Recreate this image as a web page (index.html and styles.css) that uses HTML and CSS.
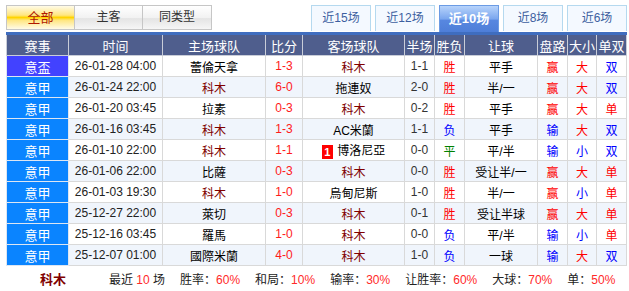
FILE: index.html
```html
<!DOCTYPE html>
<html lang="zh-CN">
<head>
    <meta charset="UTF-8">
    <title>科木 近期战绩</title>
    <link rel="stylesheet" href="styles.css">
</head>
<body>
    <div class="record">
        <div class="tabs">
            <div class="tab-group left">
                <div class="tab-l active">全部</div>
                <div class="tab-l">主客</div>
                <div class="tab-l">同类型</div>
            </div>
            <div class="tab-group right">
                <div class="tab-r">近15场</div>
                <div class="tab-r">近12场</div>
                <div class="tab-r active">近10场</div>
                <div class="tab-r">近8场</div>
                <div class="tab-r">近6场</div>
            </div>
        </div>

        <table class="matches">
            <colgroup>
                <col style="width:62px">
                <col style="width:94px">
                <col style="width:103px">
                <col style="width:37px">
                <col style="width:102px">
                <col style="width:30px">
                <col style="width:30px">
                <col style="width:73px">
                <col style="width:30px">
                <col style="width:29px">
                <col style="width:30px">
            </colgroup>
            <thead>
                <tr>
                    <th>赛事</th><th>时间</th><th>主场球队</th><th>比分</th><th>客场球队</th>
                    <th>半场</th><th>胜负</th><th>让球</th><th>盘路</th><th>大小</th><th>单双</th>
                </tr>
            </thead>
            <tbody>
                <tr>
                    <td class="league cup">意盃</td><td class="time">26-01-28 04:00</td>
                    <td>蕾倫天拿</td><td class="score">1-3</td><td class="self">科木</td>
                    <td class="half">1-1</td><td class="win">胜</td><td>平手</td>
                    <td class="win">赢</td><td class="win">大</td><td class="lose">双</td>
                </tr>
                <tr>
                    <td class="league">意甲</td><td class="time">26-01-24 22:00</td>
                    <td class="self">科木</td><td class="score">6-0</td><td>拖連奴</td>
                    <td class="half">2-0</td><td class="win">胜</td><td>半/一</td>
                    <td class="win">赢</td><td class="win">大</td><td class="lose">双</td>
                </tr>
                <tr>
                    <td class="league">意甲</td><td class="time">26-01-20 03:45</td>
                    <td>拉素</td><td class="score">0-3</td><td class="self">科木</td>
                    <td class="half">0-2</td><td class="win">胜</td><td>平手</td>
                    <td class="win">赢</td><td class="win">大</td><td class="win">单</td>
                </tr>
                <tr>
                    <td class="league">意甲</td><td class="time">26-01-16 03:45</td>
                    <td class="self">科木</td><td class="score">1-3</td><td>AC米蘭</td>
                    <td class="half">1-1</td><td class="lose">负</td><td>平手</td>
                    <td class="lose">输</td><td class="win">大</td><td class="lose">双</td>
                </tr>
                <tr>
                    <td class="league">意甲</td><td class="time">26-01-10 22:00</td>
                    <td class="self">科木</td><td class="score">1-1</td>
                    <td><span class="card">1</span> 博洛尼亞</td>
                    <td class="half">0-0</td><td class="draw">平</td><td>平/半</td>
                    <td class="lose">输</td><td class="lose">小</td><td class="lose">双</td>
                </tr>
                <tr>
                    <td class="league">意甲</td><td class="time">26-01-06 22:00</td>
                    <td>比薩</td><td class="score">0-3</td><td class="self">科木</td>
                    <td class="half">0-0</td><td class="win">胜</td><td>受让半/一</td>
                    <td class="win">赢</td><td class="win">大</td><td class="win">单</td>
                </tr>
                <tr>
                    <td class="league">意甲</td><td class="time">26-01-03 19:30</td>
                    <td class="self">科木</td><td class="score">1-0</td><td>烏甸尼斯</td>
                    <td class="half">1-0</td><td class="win">胜</td><td>半/一</td>
                    <td class="win">赢</td><td class="lose">小</td><td class="win">单</td>
                </tr>
                <tr>
                    <td class="league">意甲</td><td class="time">25-12-27 22:00</td>
                    <td>萊切</td><td class="score">0-3</td><td class="self">科木</td>
                    <td class="half">0-1</td><td class="win">胜</td><td>受让半球</td>
                    <td class="win">赢</td><td class="win">大</td><td class="win">单</td>
                </tr>
                <tr>
                    <td class="league">意甲</td><td class="time">25-12-16 03:45</td>
                    <td>羅馬</td><td class="score">1-0</td><td class="self">科木</td>
                    <td class="half">0-0</td><td class="lose">负</td><td>平/半</td>
                    <td class="lose">输</td><td class="lose">小</td><td class="win">单</td>
                </tr>
                <tr>
                    <td class="league">意甲</td><td class="time">25-12-07 01:00</td>
                    <td>國際米蘭</td><td class="score">4-0</td><td class="self">科木</td>
                    <td class="half">1-0</td><td class="lose">负</td><td>一球</td>
                    <td class="lose">输</td><td class="win">大</td><td class="lose">双</td>
                </tr>
            </tbody>
        </table>

        <div class="summary">
            <span class="team">科木</span>
            <span>最近 <em>10</em> 场</span>
            <span>胜率：<em>60%</em></span>
            <span>和局：<em>10%</em></span>
            <span>输率：<em>30%</em></span>
            <span>让胜率：<em>60%</em></span>
            <span>大球：<em>70%</em></span>
            <span>单：<em>50%</em></span>
        </div>
    </div>
</body>
</html>
```

FILE: styles.css
```css
body {
    margin: 0;
    background: #fff;
    font-family: "Liberation Sans", "Noto Sans CJK SC", sans-serif;
    font-size: 12px;
    color: #000;
}

.record {
    width: 620px;
    padding: 5px 0 0 6px;
}

/* tab strip */
.tabs {
    display: flex;
    justify-content: space-between;
    align-items: flex-start;
    height: 27px;
}

.tab-group {
    display: flex;
}

.tab-group.right {
    gap: 4px;
    margin-right: -1px;
}

.tab-l {
    width: 67px;
    height: 23px;
    line-height: 23px;
    text-align: center;
    border: 1px solid #c6c6c6;
    margin-right: -1px;
    background: linear-gradient(#ffffff, #f2f2f2 50%, #e4e4e4 55%, #f6f6f6);
    color: #333;
}

.tab-l:last-child {
    width: 68px;
}

.tab-l.active {
    font-size: 13px;
    color: #b01800;
    background: linear-gradient(#fffbe8, #ffe680 40%, #ffd400 50%, #ffe680 62%, #fffbe8);
}

.tab-r {
    width: 58px;
    height: 25px;
    line-height: 25px;
    text-align: center;
    border: 1px solid #b5d9ef;
    border-bottom: none;
    background: #f4f9ff;
    color: #3d5fa0;
}

.tab-r.active {
    height: 26px;
    line-height: 26px;
    border-color: #6b9be4;
    font-weight: bold;
    font-size: 13px;
    color: #fff;
    background: linear-gradient(#b7d3fb, #7aa6ee 50%, #5787e0 55%, #4e7ed8);
}

/* match table */
.matches {
    width: 620px;
    table-layout: fixed;
    border-collapse: collapse;
    border-top: 3px solid #3f6dbf;
}

.matches th,
.matches td {
    height: 20px;
    padding: 0;
    text-align: center;
    white-space: nowrap;
    overflow: hidden;
    border: 1px solid #d9d9d9;
}

.matches th {
    background: #4f5e8d;
    color: #fff;
    font-weight: normal;
    font-size: 13px;
    border-color: #c9cdd8;
}

.matches tbody tr:nth-child(even) td {
    background: #f0f5fc;
}

.matches td.league,
.matches tbody tr:nth-child(even) td.league {
    background: #0a84ff;
    color: #fff;
    font-size: 13px;
    border-color: #dde6f2;
}

.matches td.league.cup {
    background: #4242ff;
}

.time {
    color: #222;
}

.self {
    color: #800000;
}

.score {
    color: #ff1a1a;
}

.half {
    color: #333;
}

.win {
    color: #ff0000;
}

.lose {
    color: #0000ff;
}

.draw {
    color: #008000;
}

.card {
    display: inline-block;
    width: 11px;
    height: 14px;
    line-height: 14px;
    margin-right: 1px;
    background: #ff0000;
    color: #fff;
    font-size: 11px;
    font-weight: bold;
    vertical-align: -1px;
}

/* summary line */
.summary {
    display: flex;
    gap: 15px;
    height: 25px;
    align-items: center;
    padding-left: 34px;
    color: #222;
}

.summary .team {
    width: 54px;
    font-size: 13px;
    font-weight: bold;
    color: #800000;
}

.summary em {
    font-style: normal;
    color: #ff2a2a;
}
```
